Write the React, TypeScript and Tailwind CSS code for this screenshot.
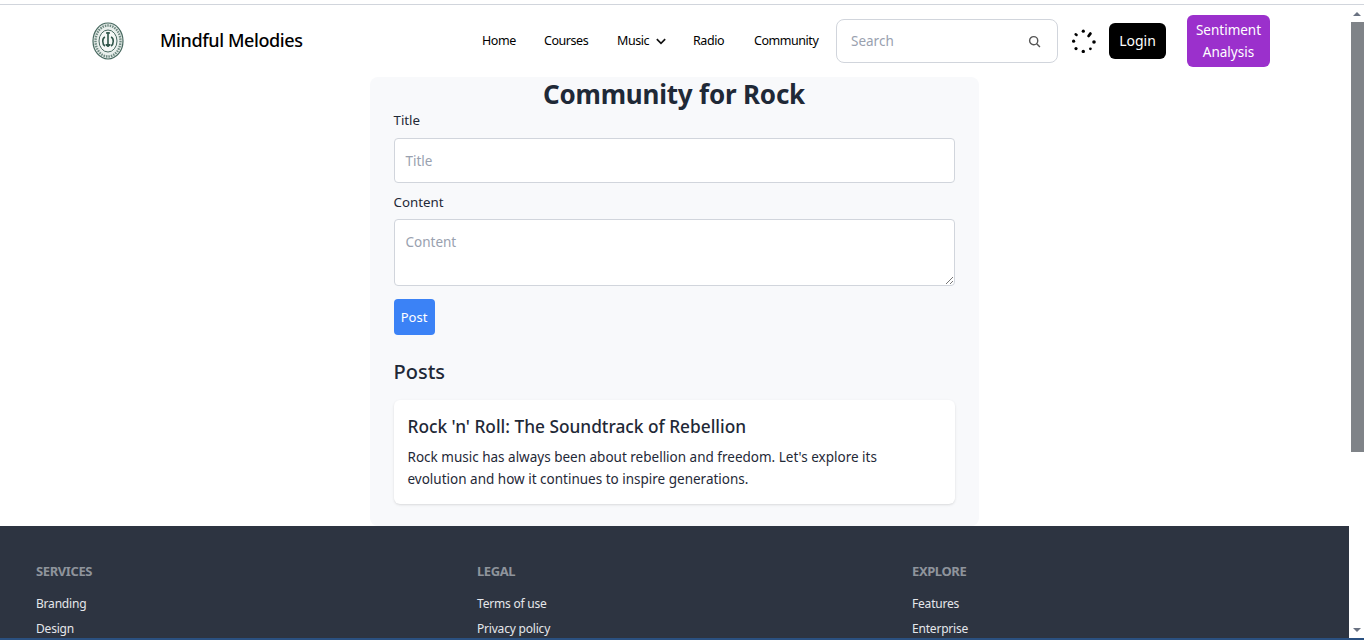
const font = { fontFamily: '"Noto Sans", sans-serif' };

const Logo = () => (
  <svg viewBox="0 0 32 38" className="h-[38px] w-[32px]">
    <ellipse cx="16" cy="19" rx="15" ry="18" fill="#e9efec" stroke="#47685f" strokeWidth="1.2" />
    <ellipse cx="16" cy="19" rx="12.5" ry="15.5" fill="none" stroke="#6f8a82" strokeWidth="2.4" strokeDasharray="1.5 1" />
    <ellipse cx="16" cy="19" rx="9" ry="11" fill="#f4f7f5" stroke="#47685f" strokeWidth="1" />
    <path d="M16 10v15M14 11h4M13 15c-3 1-3 7 0 9M19 15c3 1 3 7 0 9" fill="none" stroke="#2f5549" strokeWidth="1.6" />
    <path d="M13.5 22a2.5 2.5 0 0 0 5 0z" fill="#2f5549" />
  </svg>
);

const Spinner = () => (
  <svg viewBox="0 0 24 24" className="h-6 w-6">
    <circle cx="11.3" cy="2.2" r="1.6" fill="#000" />
    <path d="M16.6 7l1.8-2.4" stroke="#000" strokeWidth="2.8" strokeLinecap="round" />
    <circle cx="22" cy="13" r="1.8" fill="#000" />
    <circle cx="18.4" cy="19.8" r="1.4" fill="#000" />
    <circle cx="11.3" cy="22.4" r="1.7" fill="#000" />
    <circle cx="4" cy="19.6" r="1.6" fill="#000" />
    <circle cx="1.6" cy="12.2" r="1.6" fill="#000" />
    <path d="M3.6 5.2l1 .8" stroke="#000" strokeWidth="2.4" strokeLinecap="round" />
  </svg>
);

const Navbar = () => (
  <nav className="flex h-[72px] items-center">
    <div className="ml-[92px] w-[68px]">
      <Logo />
    </div>
    <span className="w-[322px] pb-[2px] text-lg font-medium leading-7 tracking-[-0.4px] text-black">Mindful Melodies</span>
    <div className="flex items-center text-[12.5px] tracking-[-0.45px] text-black">
      <a className="w-[62px]">Home</a>
      <a className="w-[73px]">Courses</a>
      <a className="flex w-[76px] items-center">
        Music
        <svg viewBox="0 0 12 8" className="ml-[7px] h-[7px] w-[10px]" fill="none" stroke="#111" strokeWidth="2">
          <path d="M1 1.2l5 5 5-5" />
        </svg>
      </a>
      <a className="w-[61px]">Radio</a>
      <a className="w-[82px]">Community</a>
    </div>
    <div className="flex h-[44px] w-[222px] items-center justify-between rounded-lg border border-gray-300 pl-[14px] pr-[16px]">
      <span className="text-[13.5px] text-gray-400">Search</span>
      <svg viewBox="0 0 24 24" className="h-[13px] w-[13px]" fill="none" stroke="#555" strokeWidth="2.6">
        <circle cx="10.5" cy="10.5" r="7.5" />
        <path d="M16 16l6 6" />
      </svg>
    </div>
    <div className="ml-[14px]">
      <Spinner />
    </div>
    <button className="ml-[13px] h-9 w-[57px] rounded-md bg-black text-sm text-white">Login</button>
    <button className="ml-[21px] h-[52px] w-[83px] rounded-md bg-[#9b30cc] text-[13.5px] leading-[22px] text-white">
      Sentiment Analysis
    </button>
  </nav>
);

const Form = () => (
  <section className="mx-auto flex h-[449px] w-[609px] flex-col rounded-lg bg-[#f8f9fb] px-6 text-[#1f2937]">
    <h1 className="mt-[-1px] text-center text-[26px] font-bold leading-9 tracking-[-0.2px]">Community for Rock</h1>
    <label className="mt-[-2px] text-[13.3px] leading-[20px]">Title</label>
    <div className="mt-[8px] flex h-[45px] items-center rounded border border-gray-300 bg-white px-[11px] pt-[2px] text-[13.5px] text-gray-400">
      Title
    </div>
    <label className="mt-[9px] text-[13.3px] leading-[20px]">Content</label>
    <div className="relative mt-[7px] h-[67px] rounded border border-gray-300 bg-white px-[11px] pt-[12px] text-[13.5px] leading-5 text-gray-400">
      Content
      <svg viewBox="0 0 10 10" className="absolute bottom-0 right-0 h-[10px] w-[10px]" stroke="#777" strokeWidth="1">
        <path d="M2 9l7-7M6 9l3-3" />
      </svg>
    </div>
    <button className="mt-[13px] h-9 w-[41px] rounded bg-[#3b82f6] pt-[2px] text-[13px] text-white">Post</button>
    <h2 className="mt-[21px] text-[20px] font-medium leading-8">Posts</h2>
    <article className="mt-[12px] h-[104px] rounded-md bg-white pl-[14px] pr-[30px] pt-[13px] shadow-sm">
      <h3 className="text-[17.3px] font-medium leading-7">Rock &apos;n&apos; Roll: The Soundtrack of Rebellion</h3>
      <p className="mt-[5px] text-[13.5px] leading-[22px]">
        Rock music has always been about rebellion and freedom. Let&apos;s explore its evolution and how it continues
        to inspire generations.
      </p>
    </article>
  </section>
);

const columns = [
  { title: "SERVICES", width: "w-[441px]", links: ["Branding", "Design"] },
  { title: "LEGAL", width: "w-[435px]", links: ["Terms of use", "Privacy policy"] },
  { title: "EXPLORE", width: "w-[300px]", links: ["Features", "Enterprise"] },
];

const Footer = () => (
  <footer className="flex h-[112px] overflow-hidden bg-[#2d3441] pl-9 pt-[36px]">
    {columns.map((col) => (
      <div key={col.title} className={col.width}>
        <h6 className="text-[13px] font-bold leading-[18px] tracking-[-0.4px] text-[#8f949c]">{col.title}</h6>
        <ul className="mt-[15px] flex flex-col gap-[7px] text-[12px] leading-[18px] tracking-[-0.2px] text-gray-200">
          {col.links.map((link) => (
            <li key={link}>{link}</li>
          ))}
        </ul>
      </div>
    ))}
  </footer>
);

const Scrollbar = () => (
  <div className="flex w-[15px] flex-col items-end bg-white">
    <div className="flex h-[17px] w-full items-center justify-center">
      <div className="h-0 w-0 border-x-[4px] border-b-[4px] border-x-transparent border-b-gray-500" />
    </div>
    <div className="h-[430px] w-[13px] bg-[#7f8388]" />
    <div className="flex-1" />
    <div className="flex h-[17px] w-full items-center justify-center">
      <div className="h-0 w-0 border-x-[4px] border-t-[4px] border-x-transparent border-t-gray-500" />
    </div>
  </div>
);

export default function App() {
  return (
    <div className="flex h-[640px] w-[1364px] flex-col overflow-hidden bg-white" style={font}>
      <div className="h-[5px] border-b border-gray-300" />
      <div className="flex min-h-0 flex-1">
        <main className="flex w-[1349px] flex-col">
          <Navbar />
          <div className="h-[449px] pr-[1px]">
            <Form />
          </div>
          <Footer />
        </main>
        <Scrollbar />
      </div>
      <div className="h-[2px] bg-[#2a5080]" />
    </div>
  );
}
